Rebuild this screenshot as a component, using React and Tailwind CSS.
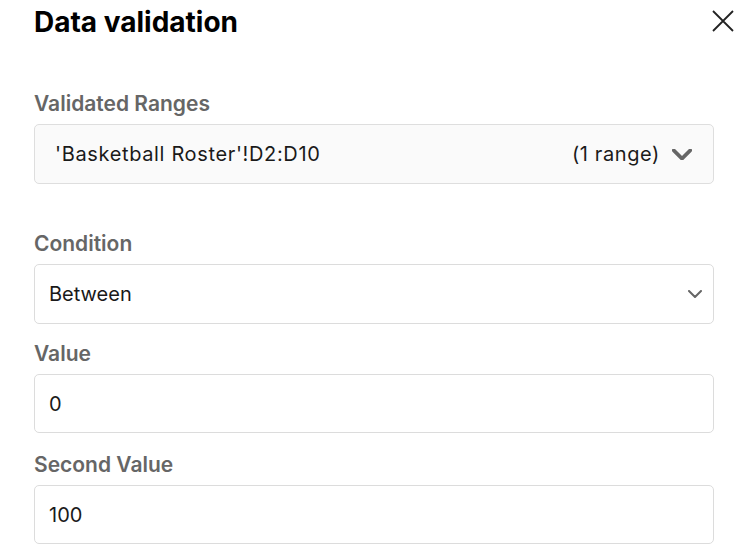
import { useState } from 'react';

const Label = ( { children } ) => (
    <div className="h-6 leading-6 text-[21px] font-semibold text-[#666666] mb-2">{ children }</div>
);

const Chevron = ( { className , width = 2 } ) => (
    <svg viewBox="0 0 14 8" className={ className } fill="none">
        <path d="M1 1l6 6 6-6" stroke="currentColor" strokeWidth={ width } strokeLinecap="round" strokeLinejoin="round"/>
    </svg>
);

const Field = ( { value } ) => (
    <div className="h-[59px] border border-[#dcdcdc] rounded-[5px] bg-white flex items-center px-[14px] text-[20px] text-[#1a1a1a]">
        { value }
    </div>
);

export default function App () {
    const [ condition ] = useState ( 'Between' );
    return (
        <div className="w-[756px] h-[560px] bg-white overflow-hidden pl-[34px] pr-[42px]" style={ { fontFamily : 'Inter, "Noto Sans", sans-serif' } }>
            {/* header */ }
            <div className="flex justify-between items-start pt-1">
                <h1 className="text-[28px] leading-9 font-bold text-black">Data validation</h1>
                <button className="mt-[6px] -mr-[20px] text-[#222]">
                    <svg width="22" height="22" viewBox="0 0 22 22" fill="none">
                        <path d="M1 1l20 20M21 1L1 21" stroke="currentColor" strokeWidth="1.8"/>
                    </svg>
                </button>
            </div>

            <div className="mt-[52px]">
                <Label>Validated Ranges</Label>
                <div className="h-[60px] border border-[#dedede] rounded-[5px] bg-[#fafafa] flex items-center pl-5 pr-[21px] text-[20px] text-[#1a1a1a]">
                    <span className="flex-1 tracking-[0.65px]">'Basketball Roster'!D2:D10</span>
                    <span className="tracking-[0.6px]">(1 range)</span>
                    <Chevron className="w-[20px] h-[11px] ml-[12px] text-[#666]" width={ 2.6 }/>
                </div>
            </div>

            <div className="mt-[48px]">
                <Label>Condition</Label>
                <div className="h-[60px] border border-[#dcdcdc] rounded-[5px] bg-white flex items-center pl-[14px] pr-[11px] text-[20px] text-[#1a1a1a]">
                    <span className="flex-1">{ condition }</span>
                    <Chevron className="w-[14px] h-[8px] text-[#666]"/>
                </div>
            </div>

            <div className="mt-[18px]">
                <Label>Value</Label>
                <Field value="0"/>
            </div>

            <div className="mt-5">
                <Label>Second Value</Label>
                <Field value="100"/>
            </div>
        </div>
    );
}
